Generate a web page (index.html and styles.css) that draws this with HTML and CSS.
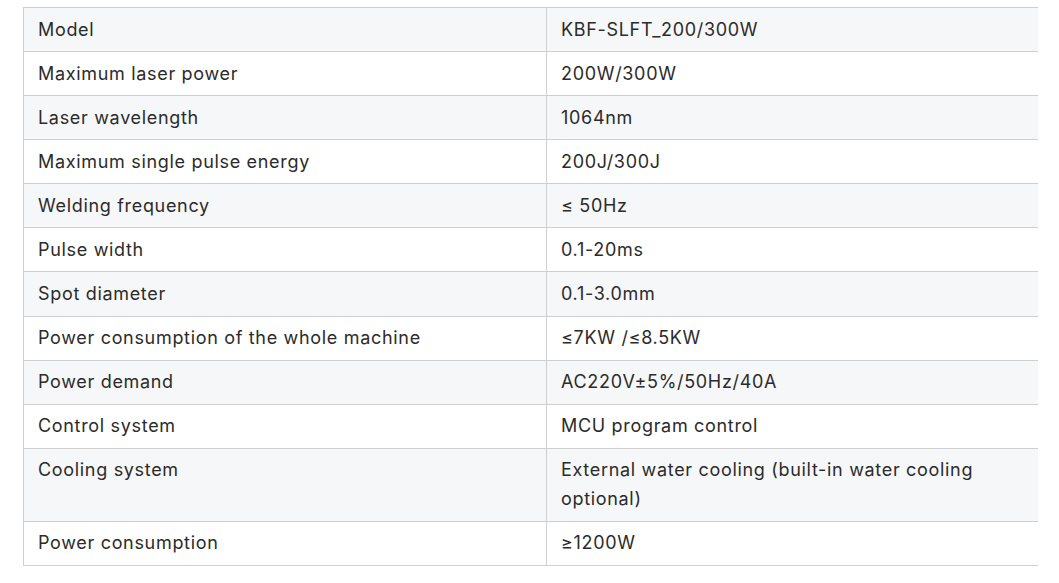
FILE: index.html
```html
<!DOCTYPE html>
<html>
<head>
<meta charset="utf-8">
<link rel="stylesheet" href="styles.css">
</head>
<body>
<div class="wrap">
<table class="spec">
<colgroup><col class="c1"><col class="c2"></colgroup>
<tbody>
<tr><td>Model</td><td>KBF-SLFT_200/300W</td></tr>
<tr><td>Maximum laser power</td><td>200W/300W</td></tr>
<tr><td>Laser wavelength</td><td>1064nm</td></tr>
<tr><td>Maximum single pulse energy</td><td>200J/300J</td></tr>
<tr><td>Welding frequency</td><td>≤ 50Hz</td></tr>
<tr><td>Pulse width</td><td>0.1-20ms</td></tr>
<tr><td>Spot diameter</td><td>0.1-3.0mm</td></tr>
<tr><td>Power consumption of the whole machine</td><td>≤7KW /≤8.5KW</td></tr>
<tr><td>Power demand</td><td>AC220V±5%/50Hz/40A</td></tr>
<tr><td>Control system</td><td>MCU program control</td></tr>
<tr><td>Cooling system</td><td>External water cooling (built-in water cooling optional)</td></tr>
<tr><td>Power consumption</td><td>≥1200W</td></tr>
</tbody>
</table>
</div>
</body>
</html>
```
FILE: styles.css
```css
html, body {
  margin: 0;
  padding: 0;
  background: #fff;
}
.wrap {
  padding: 7px 0 0 23px;
  width: 1015px;
  overflow: hidden;
}
.spec {
  border-collapse: collapse;
  table-layout: fixed;
  width: 1016px;
  font-family: Inter, "Noto Sans", sans-serif;
  font-size: 18px;
  line-height: 28.8px;
  letter-spacing: 0.68px;
  color: #2b2b2b;
}
.c1 { width: 523px; }
.c2 { width: 493px; }
.spec td {
  border: 1px solid #cfcfcf;
  padding: 7.65px 14px 6.65px;
  vertical-align: top;
  text-align: left;
}
.spec tr:nth-child(odd) td {
  background: #f6f7f8;
}
```
